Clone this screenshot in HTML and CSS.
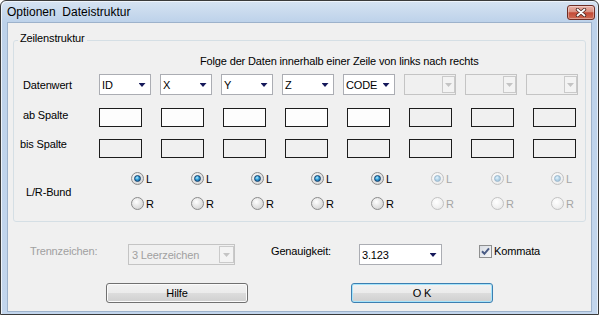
FILE: index.html
```html
<!DOCTYPE html>
<html>
<head>
<meta charset="utf-8">
<link rel="stylesheet" href="styles.css">
</head>
<body>
<div class="window">
  <div class="titlebar">
    <span class="title">Optionen  Dateistruktur</span>
    <span class="close">
      <svg width="12" height="9" viewBox="0 0 12 9">
        <path d="M2.5 1.5 L9.5 7.5 M9.5 1.5 L2.5 7.5" stroke="#4a2620" stroke-width="3.4" stroke-linecap="round" fill="none"/>
        <path d="M2.5 1.5 L9.5 7.5 M9.5 1.5 L2.5 7.5" stroke="#ffffff" stroke-width="1.8" stroke-linecap="round" fill="none"/>
      </svg>
    </span>
  </div>
  <div class="client">
    <div class="group">
      <span class="legend">Zeilenstruktur</span>
      <div class="heading">Folge der Daten innerhalb einer Zeile von links nach rechts</div>

      <div class="row row-combos">
        <span class="label">Datenwert</span>
        <div class="combos">
          <div class="combo"><span class="val">ID</span><span class="cbtn"><i class="arrow"></i></span></div>
          <div class="combo"><span class="val">X</span><span class="cbtn"><i class="arrow"></i></span></div>
          <div class="combo"><span class="val">Y</span><span class="cbtn"><i class="arrow"></i></span></div>
          <div class="combo"><span class="val">Z</span><span class="cbtn"><i class="arrow"></i></span></div>
          <div class="combo"><span class="val">CODE</span><span class="cbtn"><i class="arrow"></i></span></div>
          <div class="combo dis"><span class="val"></span><span class="cbtn"><i class="arrow"></i></span></div>
          <div class="combo dis"><span class="val"></span><span class="cbtn"><i class="arrow"></i></span></div>
          <div class="combo dis"><span class="val"></span><span class="cbtn"><i class="arrow"></i></span></div>
        </div>
      </div>

      <div class="row row-ab">
        <span class="label">ab Spalte</span>
        <div class="boxes">
          <span class="box white"></span><span class="box white"></span><span class="box white"></span><span class="box white"></span><span class="box white"></span><span class="box"></span><span class="box"></span><span class="box"></span>
        </div>
      </div>

      <div class="row row-bis">
        <span class="label">bis Spalte</span>
        <div class="boxes">
          <span class="box"></span><span class="box"></span><span class="box"></span><span class="box"></span><span class="box"></span><span class="box"></span><span class="box"></span><span class="box"></span>
        </div>
      </div>

      <div class="row row-radio">
        <span class="label">L/R-Bund</span>
        <div class="radios">
          <span class="ropt"><i class="radio on"></i>L</span>
          <span class="ropt"><i class="radio on"></i>L</span>
          <span class="ropt"><i class="radio on"></i>L</span>
          <span class="ropt"><i class="radio on"></i>L</span>
          <span class="ropt"><i class="radio on"></i>L</span>
          <span class="ropt dis"><i class="radio on"></i>L</span>
          <span class="ropt dis"><i class="radio on"></i>L</span>
          <span class="ropt dis"><i class="radio on"></i>L</span>
          <span class="ropt"><i class="radio"></i>R</span>
          <span class="ropt"><i class="radio"></i>R</span>
          <span class="ropt"><i class="radio"></i>R</span>
          <span class="ropt"><i class="radio"></i>R</span>
          <span class="ropt"><i class="radio"></i>R</span>
          <span class="ropt dis"><i class="radio"></i>R</span>
          <span class="ropt dis"><i class="radio"></i>R</span>
          <span class="ropt dis"><i class="radio"></i>R</span>
        </div>
      </div>
    </div>

    <div class="opts">
      <span class="lab-trenn">Trennzeichen:</span>
      <div class="combo dis trenn"><span class="val">3 Leerzeichen</span><span class="cbtn"><i class="arrow"></i></span></div>
      <span class="lab-gen">Genauigkeit:</span>
      <div class="combo gen"><span class="val">3.123</span><span class="cbtn"><i class="arrow"></i></span></div>
      <span class="chk">
        <svg width="13" height="13" viewBox="0 0 13 13">
          <path d="M3 6.3 L5.4 8.8 L10 3.4" stroke="#4b5d86" stroke-width="2" fill="none"/>
        </svg>
      </span>
      <span class="lab-kom">Kommata</span>
    </div>

    <div class="buttons">
      <span class="pbtn">Hilfe</span>
      <span class="pbtn default">O K</span>
    </div>
  </div>
</div>
</body>
</html>
```

FILE: styles.css
```css
body {
  margin: 0;
  font-family: "Liberation Sans", Arial, sans-serif;
  font-size: 11px;
  letter-spacing: -0.15px;
  color: #000;
}

.window {
  width: 599px;
  height: 315px;
  box-sizing: border-box;
  border: 1px solid #3a3a3a;
  border-radius: 6px 6px 0 0;
  background: linear-gradient(#d6e3f2, #bdd2ea 21px, #c3d6ed);
  box-shadow: inset 1px 1px 0 #eef4fb, inset -1px 0 0 #e4eef9;
  display: flex;
  flex-direction: column;
  overflow: hidden;
}

.titlebar {
  height: 21px;
  flex: none;
  display: flex;
  align-items: flex-start;
}

.title {
  font-size: 12px;
  letter-spacing: 0;
  line-height: 19px;
  padding: 2px 0 0 6px;
  white-space: pre;
}

.close {
  margin-left: auto;
  margin-top: 4px;
  margin-right: 3px;
  width: 28px;
  height: 15px;
  box-sizing: border-box;
  border: 1px solid #6e2d25;
  border-radius: 3px;
  background: linear-gradient(#eab2a8, #d99080 45%, #c34a36 52%, #cf6c55);
  box-shadow: inset 0 0 0 1px rgba(255, 255, 255, 0.35);
  display: flex;
  align-items: center;
  justify-content: center;
}

.close svg { display: block; }

.client {
  flex: 1;
  margin: 0 6px 2px 6px;
  background: #f0f0f0;
  border: 1px solid #9db2cb;
}

.group {
  position: relative;
  margin: 17px 0 0 5px;
  width: 573px;
  height: 182px;
  box-sizing: border-box;
  border: 1px solid #d5dfe5;
  border-radius: 3px;
}

.legend {
  position: absolute;
  top: -10px;
  left: 4px;
  padding: 0 2px;
  background: #f0f0f0;
  line-height: 14px;
}

.heading {
  margin: 13px 0 0 186px;
  line-height: 14px;
}

.row {
  display: flex;
  align-items: flex-start;
}

.label {
  flex: none;
  box-sizing: border-box;
  width: 85px;
  line-height: 14px;
}

.row-combos { margin-top: 6px; }
.row-combos .label { padding-left: 9px; margin-top: 4px; }

.combos {
  display: flex;
  gap: 9px;
}

.combo {
  width: 52px;
  height: 21px;
  box-sizing: border-box;
  border: 1px solid #abadb3;
  background: #fff;
  display: flex;
  align-items: stretch;
}

.combo .val {
  flex: 1;
  padding: 2px 0 0 2px;
  line-height: 17px;
  white-space: nowrap;
  overflow: hidden;
}

.combo .cbtn {
  width: 16px;
  display: flex;
  align-items: center;
  justify-content: center;
}

.arrow {
  display: block;
  width: 7px;
  height: 4px;
  background: #15185a;
  clip-path: polygon(0 0, 100% 0, 50% 100%);
  margin-top: 1px;
}

.combo.dis {
  border-color: #c4c4c4;
  background: #f0f0f0;
}

.combo.dis .cbtn {
  width: 13px;
  margin: 1px 0 1px 0;
  box-sizing: border-box;
  border: 1px solid #cacaca;
  background: #f3f3f3;
}

.combo.dis .arrow { background: #c4c4c4; }

.row-ab { margin-top: 13px; }
.row-ab .label { padding-left: 9px; }

.row-bis { margin-top: 12px; }
.row-bis .label { padding-left: 6px; margin-top: -2px; }

.boxes {
  display: flex;
  gap: 19px;
}

.box {
  width: 43px;
  height: 19px;
  box-sizing: border-box;
  border: 1px solid #1c1c1c;
  background: #f0f0f0;
}

.box.white { background: #fdfdfd; }

.row-radio { margin-top: 14px; }
.row-radio .label { width: 117px; padding-left: 12px; margin-top: 13px; }

.radios {
  display: grid;
  grid-template-columns: repeat(8, 60px);
  row-gap: 12px;
}

.ropt {
  display: flex;
  align-items: center;
  gap: 2px;
  height: 13px;
  line-height: 14px;
}

.ropt.dis { color: #a6a6a6; }

.radio {
  position: relative;
  display: block;
  width: 13px;
  height: 13px;
  box-sizing: border-box;
  border-radius: 50%;
  border: 1px solid #8b8b8b;
  background: radial-gradient(circle at 40% 35%, #ffffff 0, #e6e6e6 45%, #cbcbcb 100%);
}

.radio.on::after {
  content: "";
  position: absolute;
  left: 2px;
  top: 2px;
  width: 7px;
  height: 7px;
  box-sizing: border-box;
  border-radius: 50%;
  border: 1px solid #12406d;
  background: radial-gradient(circle at 40% 35%, #b6f0ff 0, #2f9ad6 45%, #0d4f86 100%);
}

.ropt.dis .radio {
  border-color: #c2c2c2;
  background: radial-gradient(circle at 40% 35%, #ffffff 0, #f2f2f2 50%, #e2e2e2 100%);
}

.ropt.dis .radio.on::after {
  border-color: #9bb7cc;
  background: radial-gradient(circle at 40% 35%, #e6f6fd 0, #b3d3e8 50%, #9cbdd4 100%);
}

.opts {
  display: flex;
  align-items: flex-start;
  margin-top: 22px;
  padding-left: 22px;
}

.lab-trenn {
  width: 98px;
  color: #a0a0a0;
  line-height: 14px;
}

.combo.trenn { width: 107px; color: #a0a0a0; }
.combo.trenn .val { padding-left: 3px; }
.combo.trenn .cbtn { width: 15px; }

.lab-gen {
  margin-left: 36px;
  width: 88px;
  line-height: 14px;
}

.combo.gen { width: 83px; }

.chk {
  margin-left: 37px;
  margin-top: 1px;
  width: 13px;
  height: 13px;
  box-sizing: border-box;
  border: 1px solid #8e8f8f;
  background: linear-gradient(135deg, #d9dde3, #f6f7f9);
  position: relative;
}

.chk svg {
  position: absolute;
  left: -1px;
  top: -1px;
}

.lab-kom {
  margin-left: 2px;
  line-height: 14px;
}

.buttons {
  display: flex;
  margin-top: 18px;
  padding-left: 98px;
  gap: 103px;
}

.pbtn {
  width: 142px;
  height: 20px;
  box-sizing: border-box;
  border: 1px solid #707070;
  border-radius: 3px;
  background: linear-gradient(#f2f2f2 0, #ebebeb 50%, #dddddd 50%, #cfcfcf 100%);
  box-shadow: inset 0 0 0 1px #fbfbfb;
  display: flex;
  align-items: center;
  justify-content: center;
  line-height: 14px;
}

.pbtn.default {
  border-color: #3c7fb1;
  box-shadow: inset 0 0 0 1px #a6e4fb;
}
```
